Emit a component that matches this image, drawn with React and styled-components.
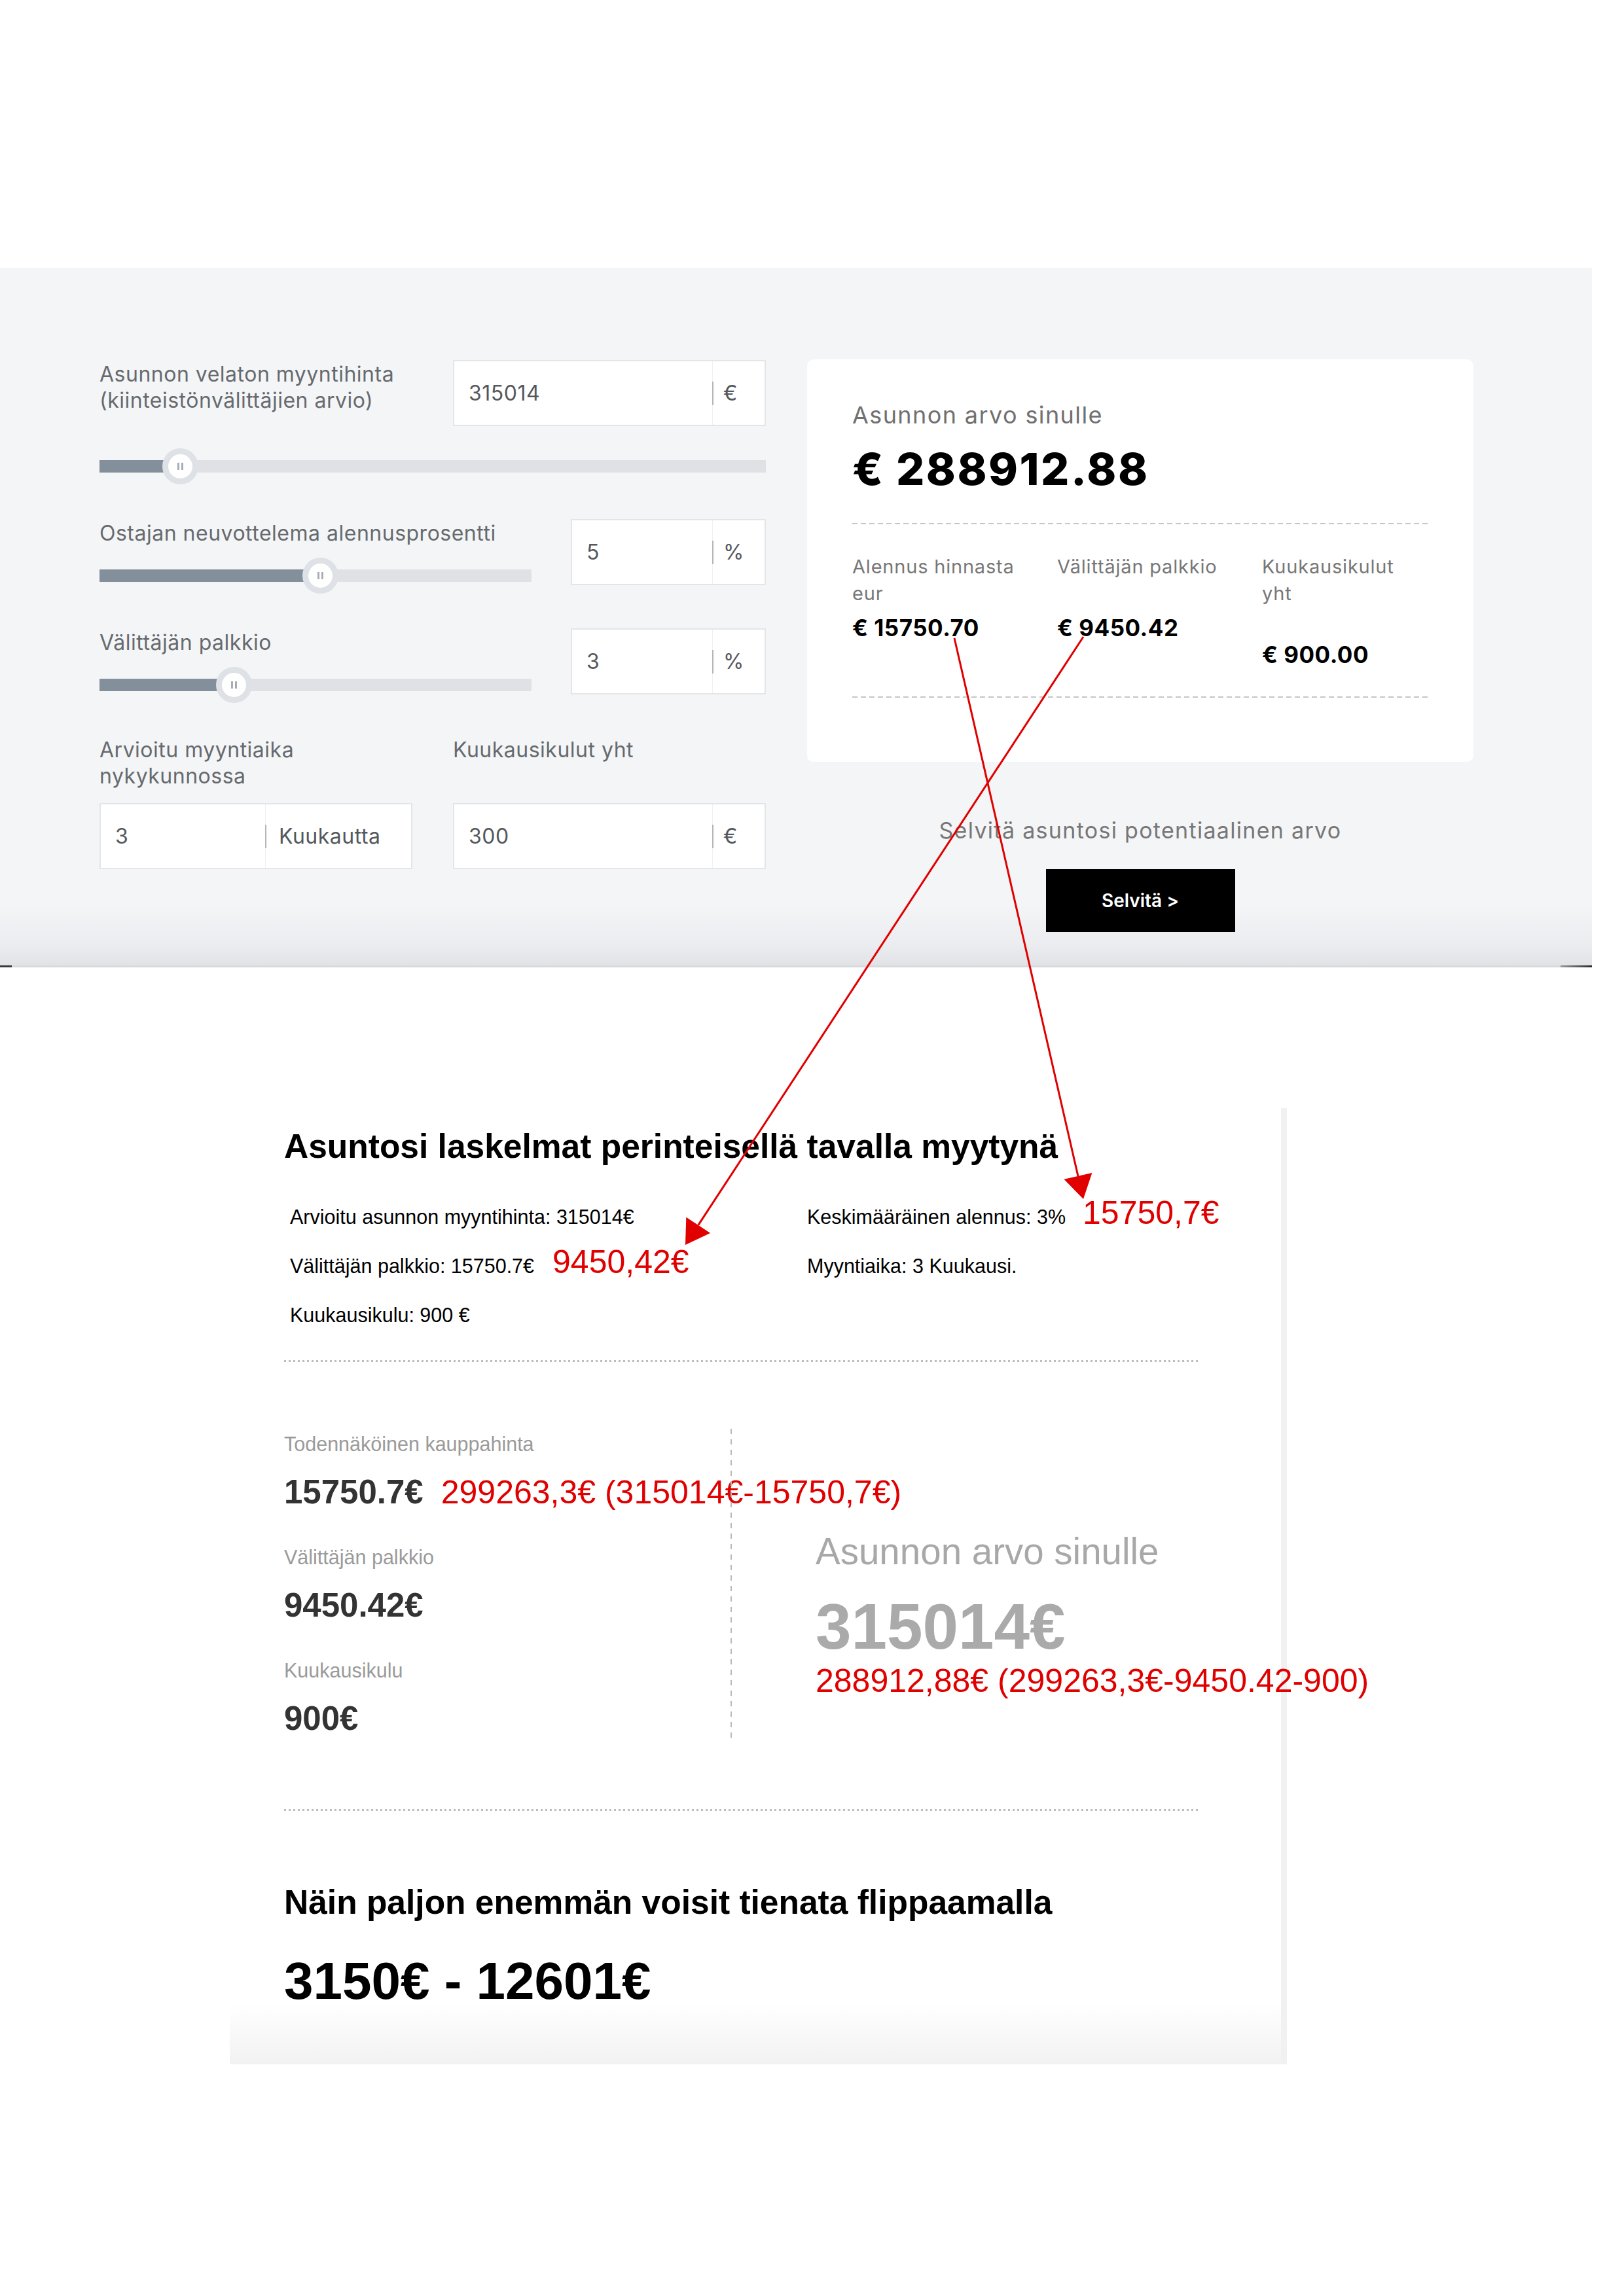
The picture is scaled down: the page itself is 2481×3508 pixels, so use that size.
import React from 'react';
import styled, { createGlobalStyle } from 'styled-components';

const GlobalStyle = createGlobalStyle`
  html, body {
    margin: 0;
    padding: 0;
    background: #fff;
  }
  body {
    font-family: Inter, 'Liberation Sans', sans-serif;
  }
  * {
    box-sizing: border-box;
  }
`;

const RED = '#e00000';

const Page = styled.div`
  position: relative;
  width: 2481px;
  min-height: 3508px;
  padding-top: 409px;
  overflow: hidden;
`;

/* ---------- calculator panel ---------- */

const CalcPanel = styled.section`
  position: relative;
  width: 2432px;
  height: 1069px;
  padding: 141px 0 0 152px;
  display: flex;
  align-items: flex-start;
  gap: 63px;
  background: linear-gradient(
    to bottom,
    #f4f5f7 0,
    #f4f5f7 91%,
    #ebecef 97%,
    #e2e3e6 99.6%,
    #d3d4d8 100%
  );
  font-family: Inter, 'Liberation Sans', sans-serif;

  &::before,
  &::after {
    content: '';
    position: absolute;
    bottom: 0;
    height: 3px;
    background: #3a3a3a;
  }
  &::before {
    left: 0;
    width: 18px;
  }
  &::after {
    right: 0;
    width: 48px;
    background: linear-gradient(to right, #9a9a9a, #2a2a2a);
  }
`;

const Form = styled.div`
  width: 1018px;
  flex: none;
  display: flex;
  flex-direction: column;
`;

const FieldGrid = styled.div`
  display: grid;
  grid-template-columns: 478px 478px;
  column-gap: 62px;
  row-gap: ${(p) => p.$rowGap || 0}px;
  margin-top: ${(p) => p.$top || 0}px;
`;

const SliderRow = styled.div`
  display: flex;
  justify-content: space-between;
  align-items: flex-start;
  margin-top: ${(p) => p.$top}px;
`;

const SliderBlock = styled.div`
  width: 660px;
`;

const Label = styled.div`
  padding-top: ${(p) => p.$pt || 0}px;
  font-size: 32px;
  line-height: 40px;
  letter-spacing: 0.5px;
  color: #666a6e;
  white-space: nowrap;
`;

const InputBox = styled.div`
  display: flex;
  width: ${(p) => p.$w}px;
  height: 101px;
  background: #fff;
  border: 2px solid #e3e5e8;
`;

const InputValue = styled.div`
  flex: 1;
  display: flex;
  align-items: center;
  padding-left: 22px;
  font-size: 32px;
  letter-spacing: 0.5px;
  color: #54585c;
`;

const Addon = styled.div`
  position: relative;
  width: ${(p) => p.$w}px;
  display: flex;
  align-items: center;
  padding-left: ${(p) => p.$pl || 16}px;
  font-size: 32px;
  letter-spacing: 0.5px;
  color: #54585c;
  border-left: 1px solid #f0f1f3;

  &::before {
    content: '';
    position: absolute;
    left: -1px;
    top: 50%;
    width: 2px;
    height: 36px;
    margin-top: -18px;
    background: #b3b6ba;
  }
`;

const Slider = styled.div`
  position: relative;
  width: 100%;
  height: 55px;
  margin-top: ${(p) => p.$top}px;

  &::before {
    content: '';
    position: absolute;
    left: 0;
    right: 0;
    top: 18px;
    height: 19px;
    background: #dfe1e5;
  }
`;

const SliderFill = styled.div`
  position: absolute;
  left: 0;
  top: 18px;
  height: 19px;
  background: #848f9c;
`;

const SliderThumb = styled.div`
  position: absolute;
  top: 0;
  width: 55px;
  height: 55px;
  margin-left: -27px;
  border-radius: 50%;
  background: #fff;
  border: 9px solid #dee1e5;
  display: flex;
  align-items: center;
  justify-content: center;
  gap: 3px;

  &::before,
  &::after {
    content: '';
    width: 3px;
    height: 11px;
    background: #a6adb5;
  }
`;

const RangeSlider = ({ pct, top }) => (
  <Slider $top={top}>
    <SliderFill style={{ width: `${pct}%` }} />
    <SliderThumb style={{ left: `${pct}%` }} />
  </Slider>
);

const Field = ({ value, unit, width, unitWidth = 80, unitPad }) => (
  <InputBox $w={width}>
    <InputValue>{value}</InputValue>
    <Addon $w={unitWidth} $pl={unitPad}>
      {unit}
    </Addon>
  </InputBox>
);

const ResultCol = styled.div`
  width: 1018px;
  flex: none;
  margin-top: -1px;
  display: flex;
  flex-direction: column;
  align-items: center;
`;

const Card = styled.div`
  align-self: stretch;
  background: #fff;
  border-radius: 10px;
  padding: 63px 69px 98px;
`;

const CardTitle = styled.div`
  font-size: 36px;
  line-height: 44px;
  letter-spacing: 1.4px;
  color: #707070;
`;

const BigValue = styled.div`
  margin-top: 22px;
  font-size: 68px;
  line-height: 77px;
  font-weight: 800;
  letter-spacing: 2.5px;
  color: #000;
`;

const Dashed = styled.div`
  height: 2px;
  margin-top: ${(p) => p.$top}px;
  background: repeating-linear-gradient(
    to right,
    #c6c6c6 0 8px,
    transparent 8px 13px
  );
`;

const Stats = styled.div`
  display: grid;
  grid-template-columns: repeat(3, 250px);
  column-gap: 63px;
  margin-top: 44px;
`;

const StatLabel = styled.div`
  min-height: ${(p) => p.$lines * 41}px;
  font-size: 29px;
  line-height: 41px;
  letter-spacing: 0.8px;
  color: #777;
`;

const StatValue = styled.div`
  margin-top: 11px;
  font-size: 35px;
  line-height: 42px;
  font-weight: 700;
  letter-spacing: 0.5px;
  color: #000;
`;

const Prompt = styled.div`
  margin-top: 85px;
  font-size: 34px;
  line-height: 40px;
  letter-spacing: 1.3px;
  color: #777;
`;

const Button = styled.button`
  margin-top: 39px;
  width: 289px;
  height: 96px;
  border: none;
  background: #000;
  color: #fff;
  font-family: inherit;
  font-size: 28px;
  font-weight: 600;
`;

/* ---------- report ---------- */

const Report = styled.section`
  width: 1615px;
  margin: 215px 0 0 351px;
  padding: 27px 0 87px 83px;
  border-right: 9px solid #f1f1f1;
  background: linear-gradient(
    to bottom,
    #fff 0,
    #fff calc(100% - 92px),
    #f2f2f2 100%
  );
  font-family: 'Liberation Sans', Arial, sans-serif;
`;

const ReportTitle = styled.h2`
  margin: ${(p) => p.$top || 0}px 0 0;
  font-size: 51.5px;
  line-height: 62px;
  font-weight: 700;
  color: #000;
  white-space: nowrap;
`;

const FactGrid = styled.div`
  display: grid;
  grid-template-columns: 790px 1fr;
  grid-auto-rows: 75px;
  margin-top: 60px;
  padding-left: 9px;
`;

const Fact = styled.div`
  display: flex;
  align-items: baseline;
  font-size: 30.5px;
  line-height: 34px;
  color: #000;
  white-space: nowrap;
`;

const Note = styled.span`
  margin-left: ${(p) => p.$gap ?? 26}px;
  font-size: 50px;
  line-height: 0;
  font-weight: 400;
  color: ${RED};
  white-space: nowrap;
`;

const DotLine = styled.div`
  width: 1396px;
  height: 3px;
  margin-top: ${(p) => p.$top}px;
  background: repeating-linear-gradient(
    to right,
    #bdbdbd 0 3px,
    transparent 3px 7px
  );
`;

const Breakdown = styled.div`
  display: flex;
  margin-top: 102px;
`;

const MetricCol = styled.div`
  flex: none;
  width: 682px;
  padding: 6px 0;
`;

const Divider = styled.div`
  flex: none;
  width: 2px;
  background: repeating-linear-gradient(
    to bottom,
    #b9b9b9 0 8px,
    transparent 8px 16px
  );
`;

const MetricLabel = styled.div`
  margin-top: ${(p) => (p.$first ? 0 : 52)}px;
  font-size: 30.5px;
  line-height: 34px;
  color: #9a9a9a;
`;

const MetricValue = styled.div`
  display: flex;
  align-items: baseline;
  margin-top: 27px;
  font-size: 51px;
  line-height: 60px;
  font-weight: 700;
  color: #333;
  white-space: nowrap;
`;

const ValueCol = styled.div`
  flex: none;
  padding: 156px 0 0 128px;
`;

const ValueTitle = styled.div`
  font-size: 56.5px;
  line-height: 64px;
  color: #a8a8a8;
`;

const ValueBig = styled.div`
  margin-top: 33px;
  font-size: 98px;
  line-height: 98px;
  font-weight: 700;
  color: #aaa;
`;

const ValueNote = styled.div`
  margin-top: 6px;
  font-size: 50px;
  line-height: 56px;
  color: ${RED};
  white-space: nowrap;
`;

const RangeValue = styled.div`
  margin-top: 50px;
  font-size: 80px;
  line-height: 80px;
  font-weight: 700;
  color: #000;
`;

/* ---------- annotation arrows ---------- */

const Overlay = styled.svg`
  position: absolute;
  left: 0;
  top: 0;
  pointer-events: none;
`;

const Arrow = ({ x1, y1, x2, y2, len = 36, half = 22 }) => {
  const dx = x2 - x1;
  const dy = y2 - y1;
  const d = Math.hypot(dx, dy);
  const ux = dx / d;
  const uy = dy / d;
  const bx = x2 - ux * len;
  const by = y2 - uy * len;
  const pts = [
    [x2, y2],
    [bx - uy * half, by + ux * half],
    [bx + uy * half, by - ux * half],
  ]
    .map((p) => p.join(','))
    .join(' ');
  return (
    <g>
      <line x1={x1} y1={y1} x2={bx} y2={by} stroke={RED} strokeWidth="3" />
      <polygon points={pts} fill={RED} />
    </g>
  );
};

const App = () => (
  <Page>
    <GlobalStyle />

    <CalcPanel>
      <Form>
        <FieldGrid>
          <Label $pt={2}>
            Asunnon velaton myyntihinta
            <br />
            (kiinteistönvälittäjien arvio)
          </Label>
          <Field value="315014" unit="€" width={478} />
        </FieldGrid>
        <RangeSlider pct={12.1} top={34} />

        <SliderRow $top={53}>
          <SliderBlock>
            <Label $pt={2}>Ostajan neuvottelema alennusprosentti</Label>
            <RangeSlider pct={51} top={17} />
          </SliderBlock>
          <Field value="5" unit="%" width={298} />
        </SliderRow>

        <SliderRow $top={53}>
          <SliderBlock>
            <Label $pt={2}>Välittäjän palkkio</Label>
            <RangeSlider pct={31} top={17} />
          </SliderBlock>
          <Field value="3" unit="%" width={298} />
        </SliderRow>

        <FieldGrid $top={52} $rowGap={21}>
          <Label>
            Arvioitu myyntiaika
            <br />
            nykykunnossa
          </Label>
          <Label>Kuukausikulut yht</Label>
          <Field value="3" unit="Kuukautta" width={478} unitWidth={223} unitPad={20} />
          <Field value="300" unit="€" width={478} />
        </FieldGrid>
      </Form>

      <ResultCol>
        <Card>
          <CardTitle>Asunnon arvo sinulle</CardTitle>
          <BigValue>€ 288912.88</BigValue>
          <Dashed $top={44} />
          <Stats>
            <div>
              <StatLabel $lines={2}>Alennus hinnasta eur</StatLabel>
              <StatValue>€ 15750.70</StatValue>
            </div>
            <div>
              <StatLabel $lines={2}>Välittäjän palkkio</StatLabel>
              <StatValue>€ 9450.42</StatValue>
            </div>
            <div>
              <StatLabel $lines={3}>Kuukausikulut yht</StatLabel>
              <StatValue>€ 900.00</StatValue>
            </div>
          </Stats>
          <Dashed $top={43} />
        </Card>
        <Prompt>Selvitä asuntosi potentiaalinen arvo</Prompt>
        <Button>Selvitä &gt;</Button>
      </ResultCol>
    </CalcPanel>

    <Report>
      <ReportTitle>Asuntosi laskelmat perinteisellä tavalla myytynä</ReportTitle>
      <FactGrid>
        <Fact>Arvioitu asunnon myyntihinta: 315014€</Fact>
        <Fact>
          Keskimääräinen alennus: 3%<Note>15750,7€</Note>
        </Fact>
        <Fact>
          Välittäjän palkkio: 15750.7€<Note $gap={28}>9450,42€</Note>
        </Fact>
        <Fact>Myyntiaika: 3 Kuukausi.</Fact>
        <Fact>Kuukausikulu: 900 €</Fact>
      </FactGrid>
      <DotLine $top={11} />

      <Breakdown>
        <MetricCol>
          <MetricLabel $first>Todennäköinen kauppahinta</MetricLabel>
          <MetricValue>
            15750.7€<Note $gap={27}>299263,3€ (315014€-15750,7€)</Note>
          </MetricValue>
          <MetricLabel>Välittäjän palkkio</MetricLabel>
          <MetricValue>9450.42€</MetricValue>
          <MetricLabel>Kuukausikulu</MetricLabel>
          <MetricValue>900€</MetricValue>
        </MetricCol>
        <Divider />
        <ValueCol>
          <ValueTitle>Asunnon arvo sinulle</ValueTitle>
          <ValueBig>315014€</ValueBig>
          <ValueNote>288912,88€ (299263,3€-9450.42-900)</ValueNote>
        </ValueCol>
      </Breakdown>

      <DotLine $top={102} />
      <ReportTitle $top={108}>Näin paljon enemmän voisit tienata flippaamalla</ReportTitle>
      <RangeValue>3150€ - 12601€</RangeValue>
    </Report>

    <Overlay width="2481" height="3508" viewBox="0 0 2481 3508">
      <Arrow x1={1458} y1={975} x2={1655} y2={1832} />
      <Arrow x1={1655} y1={973} x2={1047} y2={1902} />
    </Overlay>
  </Page>
);

export default App;
